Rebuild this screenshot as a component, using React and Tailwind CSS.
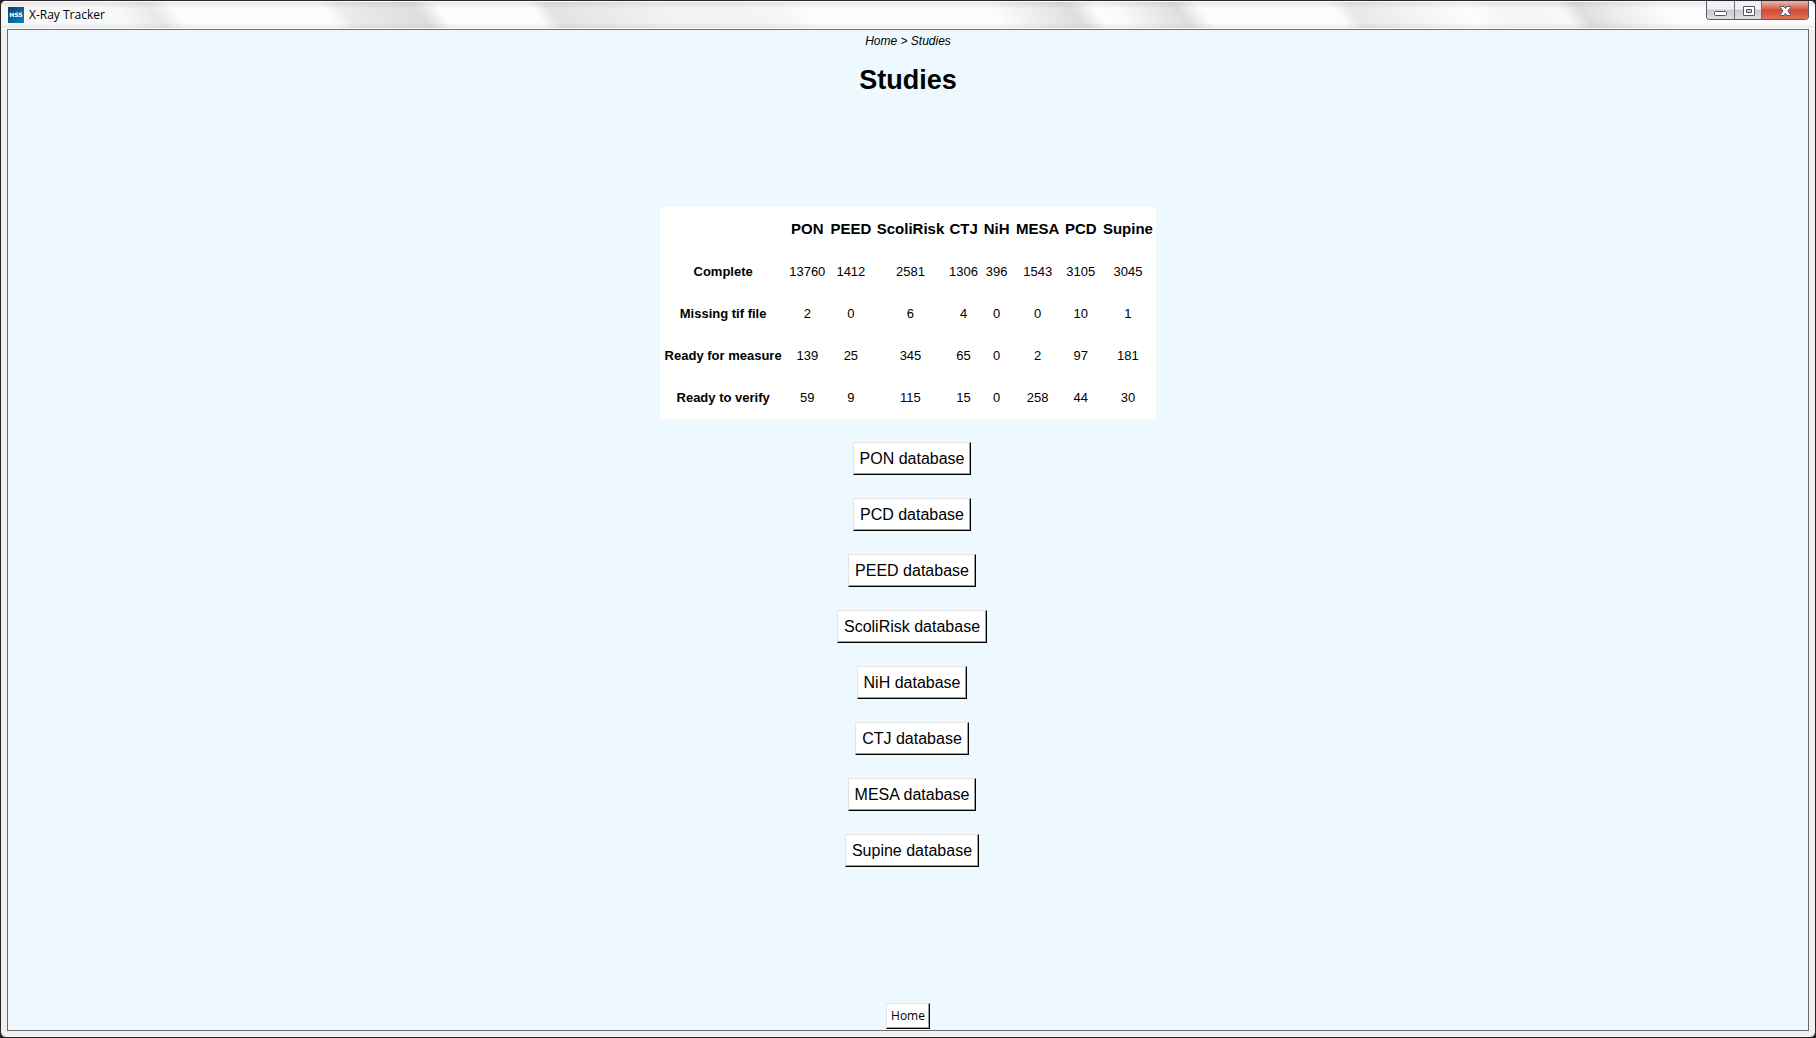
const columns = [
  { name: 'PON', width: 'w-[42px]', values: [13760, 2, 139, 59] },
  { name: 'PEED', width: 'w-[45px]', values: [1412, 0, 25, 9] },
  { name: 'ScoliRisk', width: 'w-[74px]', values: [2581, 6, 345, 115] },
  { name: 'CTJ', width: 'w-[32px]', values: [1306, 4, 65, 15] },
  { name: 'NiH', width: 'w-[34px]', values: [396, 0, 0, 0] },
  { name: 'MESA', width: 'w-[48px]', values: [1543, 0, 2, 258] },
  { name: 'PCD', width: 'w-[38px]', values: [3105, 10, 97, 44] },
  { name: 'Supine', width: 'w-[56px]', values: [3045, 1, 181, 30] },
];
const statuses = ['Complete', 'Missing tif file', 'Ready for measure', 'Ready to verify'];
const databases = ['PON', 'PCD', 'PEED', 'ScoliRisk', 'NiH', 'CTJ', 'MESA', 'Supine'];

const raised =
  'border border-t-[#e3e3e3] border-l-[#e3e3e3] border-r-black border-b-black bg-white shadow-[inset_-1px_-1px_0_#a0a0a0] active:bg-[#f0f0f0]';

/* Soft diagonal reflections on the glass title bar: [x, darkness]. */
const glass = [
  [0, 0.03], [30, 0.02], [110, 0.03], [145, 0.09], [168, 0.01], [318, 0.01], [336, 0.08], [410, 0.13],
  [434, 0.01], [526, 0.01], [544, 0.11], [660, 0.05], [770, 0.04], [800, 0.01], [985, 0.01], [1065, 0.13],
  [1090, 0.01], [1110, 0.02], [1172, 0.13], [1196, 0.01], [1328, 0.01], [1346, 0.09], [1400, 0.05], [1460, 0.01],
  [1500, 0.04], [1555, 0.03], [1575, 0.13], [1610, 0.07], [1660, 0.01], [1816, 0.01],
];

function Reflections() {
  return (
    <svg aria-hidden="true" className="absolute inset-0 h-full w-full" preserveAspectRatio="none" viewBox="0 0 1816 28">
      <defs>
        <linearGradient id="glass" gradientUnits="userSpaceOnUse" x1="0" y1="0" x2="1816" y2="0" gradientTransform="skewX(36)">
          {glass.map(([x, o]) => (
            <stop key={x} offset={x / 1816} stopColor="#000" stopOpacity={o} />
          ))}
        </linearGradient>
        <linearGradient id="rim" x1="0" y1="0" x2="0" y2="1">
          <stop offset="0" stopColor="#706070" stopOpacity="0.14" />
          <stop offset="0.25" stopColor="#706070" stopOpacity="0" />
          <stop offset="0.8" stopColor="#555" stopOpacity="0" />
          <stop offset="1" stopColor="#555" stopOpacity="0.1" />
        </linearGradient>
      </defs>
      <rect width="1816" height="28" fill="url(#glass)" />
      <rect y="1" width="1816" height="26" fill="url(#rim)" />
      <rect width="1816" height="1" fill="#fff" />
      <rect y="27" width="1816" height="1" fill="#fff" />
    </svg>
  );
}

function TitleBar() {
  return (
    <header className="relative flex h-[28px] shrink-0 items-start justify-between overflow-hidden rounded-t-[5px] bg-white pr-[6px] pl-[7px]">
      <Reflections />
      <div className="relative flex items-center gap-[5px] pt-[6px]">
        <svg width="16" height="16" viewBox="0 0 16 16" role="img" aria-label="HSS">
          <defs>
            <linearGradient id="logo" x1="0" y1="0" x2="1" y2="1">
              <stop offset="0" stopColor="#0b3a66" />
              <stop offset="1" stopColor="#0a86cf" />
            </linearGradient>
          </defs>
          <rect width="16" height="16" fill="url(#logo)" />
          <text x="8" y="10" textAnchor="middle" fontSize="6" fontWeight="700" fill="#fff" fontFamily="DejaVu Sans, sans-serif">HSS</text>
        </svg>
        <span className="font-['Open_Sans',sans-serif] text-[12px] leading-[16px] text-black">X-Ray Tracker</span>
      </div>
      <div className="relative flex h-[19px] overflow-hidden rounded-b-[4px] border border-t-0 border-[#5c5d68]">
        <button aria-label="Minimize" className="flex w-[28px] items-center justify-center border-r border-[#6e6f7a] bg-linear-to-b from-[#f1f1f3] from-45% via-[#c9cacf] via-50% to-[#dedfe3]">
          <svg width="13" height="19" viewBox="0 0 13 19"><rect x="0.500" y="10.500" width="12" height="4" rx="1" fill="#fff" stroke="#535666" /></svg>
        </button>
        <button aria-label="Maximize" className="flex w-[27px] items-center justify-center border-r border-[#6e6f7a] bg-linear-to-b from-[#f1f1f3] from-45% via-[#c9cacf] via-50% to-[#dedfe3]">
          <svg width="13" height="19" viewBox="0 0 13 19"><path fillRule="evenodd" d="M1.500 5.500h11v9h-11zM4.500 8.500h5v3h-5z" fill="#fff" stroke="#535666" /></svg>
        </button>
        <button aria-label="Close" className="flex w-[46px] items-center justify-center bg-linear-to-b from-[#e8b0a4] from-5% via-[#cf4a32] via-52% to-[#dd7159]">
          <svg width="13" height="19" viewBox="0 0 13 19"><path d="M1.500 5.500h3.500l1.500 2 1.500-2h3.500v1l-2.500 3.500 2.500 3.500v1h-3.500l-1.500-2-1.500 2h-3.500v-1l2.500-3.500-2.500-3.500z" fill="#fff" stroke="#535666" /></svg>
        </button>
      </div>
    </header>
  );
}

export default function App() {
  return (
    <div className="flex h-screen flex-col bg-[#222]">
      <div className="flex min-h-0 flex-1 flex-col rounded-[6px] border border-[#26262b] bg-[#f1f1f2]">
        <TitleBar />
        <main className="mx-[6px] mb-[6px] flex min-h-0 flex-1 flex-col items-center border border-[#6b6b6b] bg-[#edf8ff] font-['Liberation_Sans',Arial,sans-serif] text-black">
          <nav aria-label="Breadcrumb" className="pt-[2px] text-[12px] leading-[18px] italic">
            <a href="#home">Home</a> &gt; <a href="#studies">Studies</a>
          </nav>
          <h1 className="mt-[13px] text-[27px] leading-[34px] font-bold">Studies</h1>
          <table className="mt-[110px] w-[496px] table-fixed border-collapse bg-white text-center">
            <thead>
              <tr className="h-[44px] text-[15px]">
                <td className="w-[126px]"></td>
                {columns.map((c) => (
                  <th key={c.name} scope="col" className={`${c.width} p-0 font-bold`}>{c.name}</th>
                ))}
              </tr>
            </thead>
            <tbody>
              {statuses.map((s, i) => (
                <tr key={s} className="h-[42px] text-[13px]">
                  <th scope="row" className="p-0 font-bold">{s}</th>
                  {columns.map((c) => (
                    <td key={c.name} className="p-0">{c.values[i]}</td>
                  ))}
                </tr>
              ))}
            </tbody>
          </table>
          <div className="mt-[23px] flex flex-col items-center gap-[23px] pl-[8px]">
            {databases.map((d) => (
              <button key={d} className={`${raised} h-[33px] px-[6px] text-[16px] leading-[20px]`}>{d} database</button>
            ))}
          </div>
          <button className={`${raised} mt-auto mb-[1px] h-[26px] px-[4px] font-['Open_Sans',sans-serif] text-[12px] leading-[16px]`}>Home</button>
        </main>
      </div>
    </div>
  );
}
